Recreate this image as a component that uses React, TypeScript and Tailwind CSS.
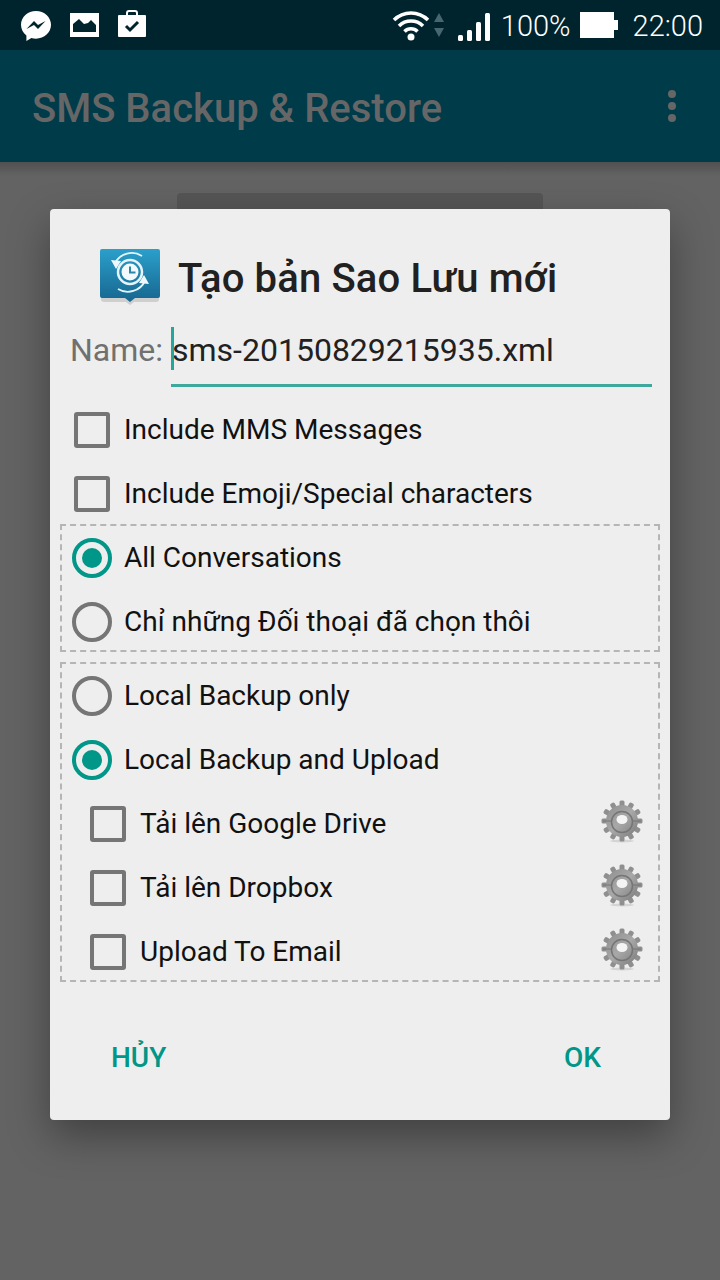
import React from "react";

function Check({ className = "" }: { className?: string }) {
  return <div className={"h-[36px] w-[36px] rounded-[3px] border-[4px] border-[#757575] " + className} />;
}

function Radio({ on }: { on?: boolean }) {
  return (
    <div
      className={
        "flex h-[40px] w-[40px] items-center justify-center rounded-full border-[4px] " +
        (on ? "border-[#009688]" : "border-[#757575]")
      }
    >
      {on && <div className="h-[20px] w-[20px] rounded-full bg-[#009688]" />}
    </div>
  );
}

function Gear() {
  const teeth = Array.from({ length: 12 }, (_, i) => i * 30);
  return (
    <svg width="44" height="46" viewBox="0 0 44 46" className="-mt-[4px] blur-[0.4px]">
      <defs>
        <linearGradient id="gearFill" x1="0" y1="0" x2="1" y2="1">
          <stop offset="0" stopColor="#8e8e8e" />
          <stop offset="0.5" stopColor="#a8a8a8" />
          <stop offset="1" stopColor="#7a7a7a" />
        </linearGradient>
      </defs>
      <ellipse cx="22" cy="42" rx="12" ry="1.500" fill="#d4d4d4" />
      {teeth.map((a) => (
        <rect key={a} x="19.500" y="1.500" width="5" height="9" rx="1.500" fill="#8f8f8f" transform={`rotate(${a} 22 22)`} />
      ))}
      <circle cx="22" cy="22" r="16" fill="url(#gearFill)" />
      <circle cx="22" cy="23" r="10.500" fill="none" stroke="#757575" strokeWidth="1.500" />
      <path d="M3 22h9M32 22h9" stroke="#777" strokeWidth="1" />
      <ellipse cx="22" cy="20.500" rx="5.500" ry="4.500" fill="#f4f4f4" />
    </svg>
  );
}

function AppIcon() {
  return (
    <svg width="62" height="60" viewBox="0 0 62 60" className="-mt-[2px]">
      <defs>
        <linearGradient id="appBlue" x1="0" y1="0" x2="0" y2="1">
          <stop offset="0" stopColor="#2b9fcb" />
          <stop offset="1" stopColor="#16668f" />
        </linearGradient>
      </defs>
      <path d="M2 46h58v5q0 3-3 3H35l-4 3-4-3H5q-3 0-3-3z" fill="#cfcfcf" />
      <path d="M3 1h56q2 0 2 2v45q0 2-2 2H36l-5 4-5-4H3q-2 0-2-2V3q0-2 2-2z" fill="url(#appBlue)" />
      <circle cx="31" cy="24" r="12" fill="none" stroke="#e6f4fa" strokeWidth="2.500" />
      <circle cx="31" cy="24" r="8.500" fill="#f2f9fc" />
      <path d="M31 18.500v6h5.500" fill="none" stroke="#2a86ad" strokeWidth="2" />
      <path d="M16 15a19 19 0 0 1 27-7M46 33a19 19 0 0 1-27 8" fill="none" stroke="#e6f4fa" strokeWidth="1.800" />
      <path d="M12 12l10 1-5 8zM50 36l-10-1 5-8z" fill="#eef8fc" />
    </svg>
  );
}

function Row({
  children,
  control,
  gear,
  className,
}: {
  children: React.ReactNode;
  control: React.ReactNode;
  gear?: boolean;
  className: string;
}) {
  return (
    <div className={"flex h-[64px] items-center " + className}>
      {control}
      <span className="flex-1 whitespace-nowrap text-[28px] leading-none text-[#111]">{children}</span>
      {gear && <Gear />}
    </div>
  );
}

export default function App() {
  return (
    <div className="relative h-[1280px] w-[720px] overflow-hidden bg-[#636363] font-['Roboto',sans-serif]">
      <div className="flex h-[50px] items-center bg-[#00242e] pl-[20px] pr-[17px] text-white">
        <svg width="32" height="32" viewBox="0 0 32 32" className="mt-[1px]">
          <path d="M16 1C7.700 1 1 7.100 1 14.800c0 4.300 2 8 5.400 10.600V31l5-2.900c1.500.4 3 .6 4.600.6 8.300 0 15-6.200 15-13.900S24.300 1 16 1z" fill="#fff" />
          <path d="M6.500 19l7.500-8 4 4 7.500-4-7.500 8-4-4z" fill="#00242e" />
        </svg>
        <svg width="29" height="24" viewBox="0 0 29 24" className="ml-[18px]">
          <path d="M0 0h29v24H0z" fill="#fff" />
          <path d="M3 19V11l6-5 5 5 4-1 3-3 5 5v7z" fill="#00242e" />
        </svg>
        <svg width="28" height="28" viewBox="0 0 28 28" className="ml-[19px] -mt-[2px]">
          <path d="M9 6V3a2 2 0 0 1 2-2h6a2 2 0 0 1 2 2v3" fill="none" stroke="#fff" strokeWidth="2" />
          <path d="M1 5h26a1 1 0 0 1 1 1v20a1 1 0 0 1-1 1H1a1 1 0 0 1-1-1V6a1 1 0 0 1 1-1z" fill="#fff" />
          <path d="M8 16l4 4 8-8" fill="none" stroke="#00242e" strokeWidth="3" />
        </svg>
        <div className="flex-1" />
        <svg width="38" height="32" viewBox="0 0 38 32" className="-mt-[1px]">
          <path d="M2 11a24 24 0 0 1 34 0M7 17a17 17 0 0 1 24 0M12.500 22.500a9 9 0 0 1 13 0" fill="none" stroke="#fff" strokeWidth="3.500" />
          <circle cx="19" cy="28" r="3.500" fill="#fff" />
        </svg>
        <svg width="12" height="24" viewBox="0 0 12 24" className="ml-[3px]">
          <path d="M6 0l5 9H1z" fill="#47666f" />
          <path d="M6 24l5-9H1z" fill="#47666f" />
        </svg>
        <svg width="32" height="28" viewBox="0 0 32 28" className="ml-[13px] mt-[4px]">
          <rect x="0" y="22" width="5" height="6" rx="1.500" fill="#fff" />
          <rect x="9" y="17" width="5" height="11" rx="1.500" fill="#fff" />
          <rect x="18" y="9" width="5" height="19" rx="1.500" fill="#fff" />
          <rect x="27" y="0" width="5" height="28" rx="1.500" fill="#fff" />
        </svg>
        <span className="ml-[11px] mt-[2px] text-[29px] font-light leading-none">100%</span>
        <svg width="38" height="26" viewBox="0 0 38 26" className="ml-[9px]">
          <path d="M0 0h34v8h4v10h-4v8H0z" fill="#fff" />
        </svg>
        <span className="ml-[15px] mt-[2px] text-[29px] font-light leading-none">22:00</span>
      </div>

      <div className="flex h-[112px] items-center justify-between bg-[#003b4a] pl-[32px] pr-[44px]">
        <span className="mt-[5px] text-[40px] font-medium leading-none text-[#666]">SMS Backup &amp; Restore</span>
        <div className="flex flex-col gap-[4px]">
          <div className="h-[8px] w-[8px] rounded-full bg-[#666]" />
          <div className="h-[8px] w-[8px] rounded-full bg-[#666]" />
          <div className="h-[8px] w-[8px] rounded-full bg-[#666]" />
        </div>
      </div>
      <div className="h-[14px] bg-gradient-to-b from-[#505050] to-[#636363]" />

      <div className="mx-auto mt-[17px] h-[60px] w-[366px] rounded-[4px] bg-[#555]" />

      <div className="absolute left-[50px] top-[209px] h-[911px] w-[620px] rounded-[4px] bg-[#eeeeee] shadow-[0_16px_40px_rgba(0,0,0,0.35)]">
        <div className="flex h-[104px] items-center pl-[49px] pt-[36px]">
          <AppIcon />
          <span className="ml-[17px] whitespace-nowrap text-[40px] font-medium leading-none tracking-[0.15px] text-[#212121]">
            Tạo bản Sao Lưu mới
          </span>
        </div>
        <div className="flex h-[64px] pl-[20px] pr-[18px] pt-[10px]">
          <span className="mt-[11px] text-[32px] leading-none text-[#707070]">Name:</span>
          <div className="relative ml-[8px] h-[64px] flex-1 border-b-[3px] border-[#3fa89d]">
            <span className="absolute left-0 top-[4px] h-[43px] w-[3px] bg-[#26a69a]" />
            <span className="ml-[1px] mt-[11px] block whitespace-nowrap text-[32px] leading-none text-[#212121]">
              sms-20150829215935.xml
            </span>
          </div>
        </div>
        <div className="mt-[21px]">
          <Row className="pl-[24px]" control={<Check className="mr-[14px]" />}>Include MMS Messages</Row>
          <Row className="pl-[24px]" control={<Check className="mr-[14px]" />}>Include Emoji/Special characters</Row>
        </div>
        <div className="mx-[10px] -mt-[2px] h-[128px] border-2 border-dashed border-[#b5b5b5]">
          <Row className="pl-[10px]" control={<div className="mr-[12px]"><Radio on /></div>}>All Conversations</Row>
          <Row className="pl-[10px]" control={<div className="mr-[12px]"><Radio /></div>}>Chỉ những Đối thoại đã chọn thôi</Row>
        </div>
        <div className="mx-[10px] mt-[10px] h-[320px] border-2 border-dashed border-[#b5b5b5]">
          <Row className="pl-[10px]" control={<div className="mr-[12px]"><Radio /></div>}>Local Backup only</Row>
          <Row className="pl-[10px]" control={<div className="mr-[12px]"><Radio on /></div>}>Local Backup and Upload</Row>
          <Row className="pl-[28px] pr-[14px]" gear control={<Check className="mr-[14px]" />}>Tải lên Google Drive</Row>
          <Row className="pl-[28px] pr-[14px]" gear control={<Check className="mr-[14px]" />}>Tải lên Dropbox</Row>
          <Row className="pl-[28px] pr-[14px]" gear control={<Check className="mr-[14px]" />}>Upload To Email</Row>
        </div>
        <div className="mt-[62px] flex items-center justify-between pl-[61px] pr-[69px] text-[28px] font-medium leading-none text-[#009688]">
          <span>HỦY</span>
          <span>OK</span>
        </div>
      </div>
    </div>
  );
}
